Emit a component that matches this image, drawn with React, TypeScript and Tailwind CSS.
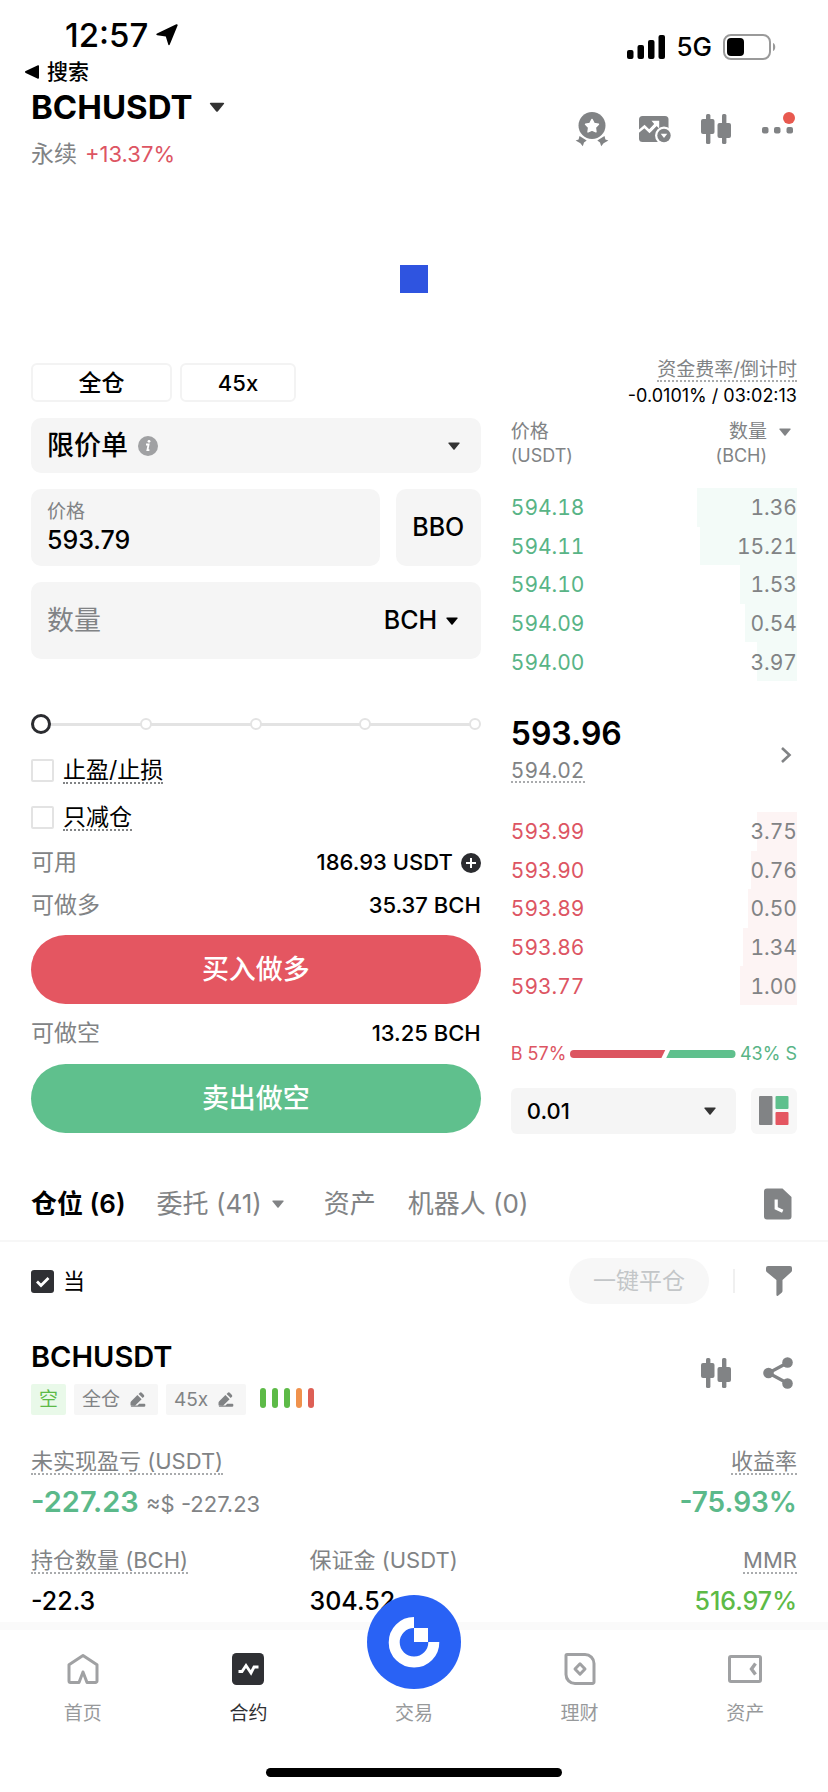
import type { ReactNode } from "react"
import clsx from "clsx"

const ASKS = [
  { price: "594.18", amount: "1.36", depth: 35 },
  { price: "594.11", amount: "15.21", depth: 34 },
  { price: "594.10", amount: "1.53", depth: 20 },
  { price: "594.09", amount: "0.54", depth: 18 },
  { price: "594.00", amount: "3.97", depth: 14 },
]

const BIDS = [
  { price: "593.99", amount: "3.75", depth: 14 },
  { price: "593.90", amount: "0.76", depth: 16 },
  { price: "593.89", amount: "0.50", depth: 17 },
  { price: "593.86", amount: "1.34", depth: 19 },
  { price: "593.77", amount: "1.00", depth: 20 },
]

const RISK_BARS = ["bg-[#5dba47]", "bg-[#5dba47]", "bg-[#5dba47]", "bg-[#f0924c]", "bg-[#dd5f55]"]

function Caret({ className }: { className?: string }) {
  return (
    <svg viewBox="0 0 12 8" className={clsx("shrink-0 fill-current", className ?? "h-2 w-3")} aria-hidden="true">
      <path d="M1 .5h10a.7.7 0 0 1 .5 1.1L6.6 7.5a.8.8 0 0 1-1.2 0L.5 1.6A.7.7 0 0 1 1 .5Z" />
    </svg>
  )
}

function Candles() {
  return (
    <svg viewBox="0 0 30 30" className="h-[30px] w-[30px] fill-[#818385]" aria-hidden="true">
      <rect x="5" y="0" width="4.4" height="30" rx="1.5" />
      <rect x="0" y="5" width="13.5" height="15" rx="2" />
      <rect x="21" y="0" width="4.4" height="30" rx="1.5" />
      <rect x="16.5" y="9" width="13.5" height="15" rx="2" />
    </svg>
  )
}

function Pencil() {
  return (
    <svg viewBox="0 0 16 16" className="h-4 w-4 fill-[#818385]" aria-hidden="true">
      <path d="M1.2 9.2 7.4 3l4.2 4.2-6.4 6.4H1.2a.7.7 0 0 1-.7-.7v-2.1c0-.6.3-1.2.7-1.6ZM8.6 1.9l1-1a1.7 1.7 0 0 1 2.4 0l1.7 1.8c.7.7.7 1.7 0 2.4l-1 1ZM7.5 13.4l1.7-1.7h5.2c.5 0 .9.4.9.9v1.2c0 .5-.4.9-.9.9H1.3c-.4 0-.6-.6-.2-1Z" />
    </svg>
  )
}

function Dotted({ children, className }: { children: ReactNode; className?: string }) {
  return (
    <span className={clsx("inline-block border-b-2 border-dotted", className)}>{children}</span>
  )
}

function IconButton({ label, children, className }: { label: string; children: ReactNode; className?: string }) {
  return (
    <button type="button" aria-label={label} className={clsx("flex items-center justify-center", className)}>
      {children}
    </button>
  )
}

function StatusBar() {
  return (
    <div>
      <div className="flex justify-between pt-[17px] pr-[52px] pl-[65px]">
        <div className="flex items-center gap-2 text-[33px] leading-9 font-medium">
          12:57
          <svg viewBox="0 0 22 22" className="h-[22px] w-[22px] fill-black" aria-hidden="true">
            <path d="M20.300.300a1 1 0 0 1 1.300 1.300l-7.800 19c-.4 1-1.600.8-1.600-.3L9.800 12.400 1.200 11.200c-1.200-.2-1.300-1.400-.2-1.800Z" />
          </svg>
        </div>
        <div className="flex h-9 items-center gap-[11px] pt-6">
          <svg viewBox="0 0 38 24" className="h-6 w-[38px] fill-black" aria-hidden="true">
            <rect x="0" y="15" width="6.500" height="9" rx="2" />
            <rect x="10.500" y="10" width="6.500" height="14" rx="2" />
            <rect x="21" y="5" width="6.500" height="19" rx="2" />
            <rect x="31.500" y="0" width="6.500" height="24" rx="2" />
          </svg>
          <span className="text-[26px] leading-6 font-medium">5G</span>
          <svg viewBox="0 0 53 26" className="h-[26px] w-[53px]" aria-hidden="true">
            <rect x="1" y="1" width="46" height="24" rx="7" fill="none" stroke="#9a9a9a" strokeWidth="2" />
            <rect x="4" y="4" width="17" height="18" rx="4" />
            <path d="M50 9c3 1 3 7 0 8Z" fill="#9a9a9a" />
          </svg>
        </div>
      </div>
      <a href="#search" className="ml-[25px] inline-flex h-[38px] items-center gap-2 align-top text-[21px] leading-6 font-medium">
        <svg viewBox="0 0 14 14" className="h-[14px] w-[14px] fill-black" aria-hidden="true">
          <path d="M12.400.400a1 1 0 0 1 1.600.800v11.600a1 1 0 0 1-1.600.8L.7 8a1.200 1.200 0 0 1 0-2Z" />
        </svg>
        搜索
      </a>
    </div>
  )
}

function Header() {
  return (
    <header className="flex items-center justify-between px-[31px]">
      <div>
        <button type="button" className="flex items-center gap-[17px] text-[33px] leading-8 font-bold">
          BCHUSDT
          <Caret className="h-[10px] w-4 text-[#333]" />
        </button>
        <p className="mt-[19px] flex gap-2 text-[22px] leading-6">
          <span className="text-[23px] text-[#818385]">永续</span>
          <span className="text-[#dd5563]">+13.37%</span>
        </p>
      </div>
      <div className="flex items-center gap-[30px]">
        <IconButton label="活动">
          <svg viewBox="0 0 34 36" className="h-9 w-[34px] fill-[#818385]" aria-hidden="true">
            <circle cx="17" cy="14.500" r="13.500" />
            <path d="m17 8.400 2.100 4 4.400.8-3.100 3.300.6 4.400-4-1.900-4 1.900.6-4.400-3.100-3.300 4.400-.8Z" fill="#fff" stroke="#fff" strokeWidth="1.400" strokeLinejoin="round" />
            <path d="m4.500 25 7.200 4.500-2.700 2-1.200 3.700-2.400-3L.6 29.600l3-1.100ZM29.500 25l-7.200 4.500 2.700 2 1.200 3.700 2.400-3 4.800-2.600-3-1.100Z" />
          </svg>
        </IconButton>
        <IconButton label="图表">
          <svg viewBox="0 0 32 28" className="h-7 w-8" aria-hidden="true">
            <rect x="0" y="1" width="29.500" height="26" rx="3.500" fill="#818385" />
            <path d="m-1 17 6.500-5.500 5 5 7.500-8" fill="none" stroke="#fff" strokeWidth="2.600" />
            <path d="M12.500 5.800h7.700v7.700l-2.700-2.500-6 6-2-2 5.700-6Z" fill="#fff" />
            <circle cx="25" cy="20.500" r="9" fill="#fff" />
            <circle cx="25" cy="20.500" r="6.700" fill="#818385" />
            <path d="M21.700 18.700h6.600L25 23Z" fill="#fff" />
          </svg>
        </IconButton>
        <IconButton label="K线">
          <Candles />
        </IconButton>
        <IconButton label="更多">
          <svg viewBox="0 0 36 36" className="h-9 w-9" aria-hidden="true">
            <rect x="1" y="16" width="6.500" height="6.500" rx="2" fill="#818385" />
            <rect x="13" y="16" width="6.500" height="6.500" rx="2" fill="#818385" />
            <rect x="25.500" y="16" width="6.500" height="6.500" rx="2" fill="#818385" />
            <circle cx="28" cy="7" r="6" fill="#e8594f" />
          </svg>
        </IconButton>
      </div>
    </header>
  )
}

function InfoRow({ label, value, children }: { label: string; value: string; children?: ReactNode }) {
  return (
    <div className="flex h-[43px] items-center justify-between">
      <span className="text-[23px] text-[#818385]">{label}</span>
      <span className="flex items-center gap-2 text-[22px] font-medium">
        {value}
        {children}
      </span>
    </div>
  )
}

function OrderForm() {
  return (
    <form className="min-w-0 pt-1">
      <div className="flex flex-col gap-4">
        <div className="flex gap-2">
          <button type="button" className="h-[39px] w-[141px] rounded-md border-2 border-[#f3f3f3] text-[23px] leading-6 font-medium">
            全仓
          </button>
          <button type="button" className="h-[39px] w-[116px] rounded-md border-2 border-[#f3f3f3] text-[22px] leading-6 font-medium">
            45x
          </button>
        </div>

        <div className="flex h-[55px] items-center gap-[10px] rounded-[10px] bg-[#f5f5f5] pr-[21px] pl-4">
          <select aria-label="订单类型" className="appearance-none text-[27px] leading-8 font-medium">
            <option>限价单</option>
          </select>
          <svg viewBox="0 0 20 20" className="h-5 w-5" aria-hidden="true">
            <circle cx="10" cy="10" r="10" fill="#a0a1a3" />
            <circle cx="11" cy="5.300" r="1.400" fill="#fff" />
            <path d="M8 8.500h2.600l-1.200 5.700h2" fill="none" stroke="#fff" strokeWidth="1.800" />
          </svg>
          <Caret className="ml-auto h-2 w-3 text-[#333]" />
        </div>

        <div className="flex gap-4">
          <label className="flex h-[77px] min-w-0 flex-1 flex-col justify-center rounded-[10px] bg-[#f5f5f5] px-4">
            <span className="text-[19px] leading-6 text-[#818385]">价格</span>
            <input type="text" defaultValue="593.79" className="w-full text-[25px] leading-8 font-medium outline-none" />
          </label>
          <button type="button" className="h-[77px] w-[85px] rounded-[10px] bg-[#f5f5f5] text-[25px] font-medium">
            BBO
          </button>
        </div>

        <div className="flex h-[77px] items-center rounded-[10px] bg-[#f5f5f5] pr-[23px] pl-4">
          <input
            type="text"
            aria-label="数量"
            placeholder="数量"
            className="min-w-0 flex-1 text-[27px] leading-8 outline-none placeholder:text-[#818385]"
          />
          <select aria-label="单位" className="appearance-none text-[25px] font-medium">
            <option>BCH</option>
          </select>
          <Caret className="ml-2 h-2 w-3" />
        </div>
      </div>

      <div className="relative mt-[55px] flex h-5 items-center">
        <div className="absolute inset-x-2 h-[3px] bg-[#e3e3e3]" />
        <div className="relative flex w-full justify-between">
          {[0, 25, 50, 75, 100].map((step) => (
            <span key={step} className="h-3 w-3 rounded-full border-2 border-[#e3e3e3] bg-white" />
          ))}
        </div>
        <input
          type="range"
          aria-label="仓位比例"
          defaultValue={0}
          className="absolute inset-0 w-full appearance-none bg-transparent [&::-webkit-slider-thumb]:h-5 [&::-webkit-slider-thumb]:w-5 [&::-webkit-slider-thumb]:appearance-none [&::-webkit-slider-thumb]:rounded-full [&::-webkit-slider-thumb]:border-3 [&::-webkit-slider-thumb]:border-[#2b2c30] [&::-webkit-slider-thumb]:bg-white"
        />
      </div>

      <div className="mt-[13px]">
        {["止盈/止损", "只减仓"].map((text) => (
          <label key={text} className="flex h-[47px] items-center gap-[9px] text-[23px] leading-6">
            <input type="checkbox" className="h-[23px] w-[23px] appearance-none rounded-xs border-2 border-[#e3e3e3]" />
            <Dotted className="border-[#818385]">{text}</Dotted>
          </label>
        ))}
      </div>

      <InfoRow label="可用" value="186.93 USDT">
        <IconButton label="充值">
          <svg viewBox="0 0 20 20" className="h-5 w-5" aria-hidden="true">
            <circle cx="10" cy="10" r="10" fill="#2b2c30" />
            <path d="M10 5v10M5 10h10" stroke="#fff" strokeWidth="2" />
          </svg>
        </IconButton>
      </InfoRow>
      <InfoRow label="可做多" value="35.37 BCH" />
      <button type="button" className="mt-2 mb-2 h-[69px] w-full rounded-full bg-[#e45661] pt-[2px] text-[27px] font-medium text-white">
        买入做多
      </button>
      <InfoRow label="可做空" value="13.25 BCH" />
      <button type="button" className="mt-[9px] h-[69px] w-full rounded-full bg-[#5fc08d] pt-[2px] text-[27px] font-medium text-white">
        卖出做空
      </button>
    </form>
  )
}

type BookRow = { price: string; amount: string; depth: number }

function BookTable({ rows, priceClass, barClass, className }: { rows: BookRow[]; priceClass: string; barClass: string; className?: string }) {
  return (
    <table className={clsx("h-[193px] w-full text-[21px] leading-6 tabular-nums", className)}>
      <tbody>
        {rows.map((row) => (
          <tr key={row.price} className="relative">
            <td className={clsx("p-0 pt-[2px]", priceClass)}>{row.price}</td>
            <td className="p-0 pt-[2px] text-right text-[#818385]">
              <span className={clsx("absolute inset-y-0 right-0", barClass)} style={{ width: `${row.depth}%` }} />
              <span className="relative">{row.amount}</span>
            </td>
          </tr>
        ))}
      </tbody>
    </table>
  )
}

function OrderBook() {
  return (
    <section className="min-w-0">
      <div className="flex flex-col items-end pt-px">
        <Dotted className="border-[#a9abad] text-[19px] leading-5 text-[#818385]">资金费率/倒计时</Dotted>
        <span className="mt-[2px] text-[18px] leading-6">-0.0101% / 03:02:13</span>
      </div>
      <div className="mt-3 flex justify-between text-[19px] leading-6 text-[#818385]">
        <div>
          价格
          <br />
          <span className="text-[18px]">(USDT)</span>
        </div>
        <button type="button" className="flex items-start gap-3 pr-[6px] text-right">
          <span>
            数量
            <br />
            <span className="text-[18px]">(BCH)</span>
          </span>
          <Caret className="mt-2 h-2 w-3" />
        </button>
      </div>

      <BookTable rows={ASKS} priceClass="text-[#58b486]" barClass="bg-[#f3fbf8]" className="mt-5" />

      <div className="mt-[37px] flex items-center justify-between">
        <div>
          <p className="text-[32px] leading-8 font-semibold">593.96</p>
          <Dotted className="mt-[11px] border-[#a9abad] align-top text-[21px] leading-5 text-[#818385] tabular-nums">594.02</Dotted>
        </div>
        <IconButton label="查看成交" className="pt-2 pr-[5px]">
          <svg viewBox="0 0 12 18" className="h-[18px] w-3" aria-hidden="true">
            <path d="m2 2 7.500 7L2 16" fill="none" stroke="#818385" strokeWidth="2.600" />
          </svg>
        </IconButton>
      </div>

      <BookTable rows={BIDS} priceClass="text-[#dd5563]" barClass="bg-[#fdf4f4]" className="mt-[29px]" />

      <div className="mt-[37px] flex h-6 items-center gap-1 text-[18px] leading-6">
        <span className="text-[#dd5563]">B 57%</span>
        <svg viewBox="0 0 172 8" preserveAspectRatio="none" className="h-2 min-w-0 flex-1" aria-hidden="true">
          <path d="M4 0h95l-4 8H4a4 4 0 0 1 0-8Z" fill="#dc5560" />
          <path d="M104 0h64a4 4 0 0 1 0 8h-68Z" fill="#5fc08d" />
        </svg>
        <span className="text-[#58b486]">43% S</span>
      </div>

      <div className="mt-[22px] flex gap-[15px]">
        <div className="flex h-[46px] min-w-0 flex-1 items-center rounded-md bg-[#f5f5f5] pr-5 pl-4">
          <select aria-label="价格精度" className="min-w-0 flex-1 appearance-none text-[22px] font-medium">
            <option>0.01</option>
          </select>
          <Caret className="h-2 w-3 text-[#333]" />
        </div>
        <IconButton label="盘口布局" className="h-[46px] w-[46px] rounded-md bg-[#f7f7f7]">
          <svg viewBox="0 0 30 30" className="h-[30px] w-[30px]" aria-hidden="true">
            <rect x="0" y="0" width="13.500" height="29" rx="1" fill="#818385" />
            <rect x="16.500" y="0" width="13" height="13" rx="1" fill="#5fc08d" />
            <rect x="16.500" y="16" width="13" height="13" rx="1" fill="#e45661" />
          </svg>
        </IconButton>
      </div>
    </section>
  )
}

function PositionTabs() {
  return (
    <nav className="mt-[34px] flex h-[74px] items-center border-b-2 border-[#f7f7f7] px-[31px] text-[26px] leading-8 text-[#818385]">
      <button type="button" className="font-semibold text-black">仓位 (6)</button>
      <button type="button" className="ml-[31px] flex items-center gap-[10px]">
        委托 (41)
        <Caret />
      </button>
      <button type="button" className="ml-10">资产</button>
      <button type="button" className="ml-8">机器人 (0)</button>
      <IconButton label="历史记录" className="mr-[5px] ml-auto">
        <svg viewBox="0 0 28 32" className="h-8 w-7" aria-hidden="true">
          <path d="M3 .5h15.500l9 8.500v19.500a3 3 0 0 1-3 3H3a3 3 0 0 1-3-3v-25a3 3 0 0 1 3-3Z" fill="#818385" />
          <path d="M12.200 11.500v8.800l6.500 3" fill="none" stroke="#fff" strokeWidth="3.200" />
        </svg>
      </IconButton>
    </nav>
  )
}

function Metric({ label, value, alignEnd, valueClass, plain }: { label: string; value: ReactNode; alignEnd?: boolean; valueClass?: string; plain?: boolean }) {
  return (
    <div className={clsx("flex flex-col", alignEnd ? "items-end" : "items-start")}>
      <Dotted className={clsx("text-[22px] leading-6 text-[#818385]", plain ? "border-transparent" : "border-[#a9abad]")}>
        {label}
      </Dotted>
      <span className={clsx("mt-[11px] leading-8", valueClass)}>{value}</span>
    </div>
  )
}

function Position() {
  return (
    <section className="px-[31px]">
      <div className="flex h-[78px] items-center">
        <label className="flex items-center gap-[9px] text-[22px] leading-6">
          <span className="relative flex">
            <input type="checkbox" defaultChecked className="peer h-[23px] w-[23px] appearance-none rounded-[3px] bg-[#2f3034]" />
            <svg viewBox="0 0 23 23" className="pointer-events-none absolute inset-0 hidden h-[23px] w-[23px] peer-checked:block" aria-hidden="true">
              <path d="m6 11.500 4 4 7.500-7.500" fill="none" stroke="#fff" strokeWidth="2.800" />
            </svg>
          </span>
          当
        </label>
        <button type="button" className="ml-auto h-[46px] w-[140px] rounded-full bg-[#f7f7f7] text-[23px] text-[#c3c6c8]">
          一键平仓
        </button>
        <span className="ml-6 h-6 w-[2px] bg-[#f0f0f0]" />
        <IconButton label="筛选" className="mr-[5px] ml-[31px]">
          <svg viewBox="0 0 26 30" className="h-[30px] w-[26px] fill-[#818385]" aria-hidden="true">
            <path d="M2 0h22a2 2 0 0 1 2 2v2.500a2 2 0 0 1-.7 1.500L16.500 14v11a2 2 0 0 1-.6 1.400L12 29.700a1 1 0 0 1-1.600-.8V14L.7 6A2 2 0 0 1 0 4.500V2a2 2 0 0 1 2-2Z" />
          </svg>
        </IconButton>
      </div>

      <div className="mt-[21px] flex items-start justify-between">
        <div>
          <h2 className="text-[29px] leading-8 font-semibold">BCHUSDT</h2>
          <div className="mt-[11px] flex items-center gap-2 text-[19px] leading-6 text-[#818385]">
            <span className="flex h-[31px] items-center rounded-xs bg-[#e9f9e9] px-2 text-[#5dba47]">空</span>
            <button type="button" className="flex h-[31px] items-center gap-[10px] rounded-xs bg-[#f6f6f6] pr-3 pl-2">
              全仓
              <Pencil />
            </button>
            <button type="button" className="flex h-[31px] items-center gap-[10px] rounded-xs bg-[#f6f6f6] pr-3 pl-2">
              45x
              <Pencil />
            </button>
            <span className="ml-[6px] flex gap-[6px] pb-1">
              {RISK_BARS.map((color, i) => (
                <span key={i} className={clsx("h-5 w-[6px] rounded-full", color)} />
              ))}
            </span>
          </div>
        </div>
        <div className="flex gap-8 pt-4 pr-1">
          <IconButton label="K线">
            <Candles />
          </IconButton>
          <IconButton label="分享">
            <svg viewBox="0 0 30 32" className="h-8 w-[30px]" aria-hidden="true">
              <path d="M25 5.500 5.500 16 25 26.500" fill="none" stroke="#818385" strokeWidth="3.200" />
              <circle cx="5.500" cy="16" r="5.300" fill="#818385" />
              <circle cx="24.500" cy="5.500" r="5.300" fill="#818385" />
              <circle cx="24.500" cy="26.500" r="5.300" fill="#818385" />
            </svg>
          </IconButton>
        </div>
      </div>

      <div className="mt-[34px] flex justify-between">
        <Metric
          label="未实现盈亏 (USDT)"
          value={
            <>
              -227.23 <span className="text-[22px] leading-none font-normal text-[#818385]">≈$ -227.23</span>
            </>
          }
          valueClass="text-[29px] font-semibold text-[#5bb98a]"
        />
        <Metric label="收益率" value="-75.93%" alignEnd valueClass="text-[28px] font-semibold text-[#5bb98a]" />
      </div>
      <div className="mt-[30px] grid grid-cols-[4fr_4fr_3fr]">
        <Metric label="持仓数量 (BCH)" value="-22.3" valueClass="text-[25px] font-medium" />
        <Metric label="保证金 (USDT)" value="304.52" valueClass="text-[25px] font-medium" plain />
        <Metric label="MMR" value="516.97%" alignEnd valueClass="text-[25px] font-medium text-[#5dba47]" />
      </div>
    </section>
  )
}

function NavItem({ label, active, children }: { label: string; active?: boolean; children: ReactNode }) {
  return (
    <a href="#" className={clsx("flex flex-1 flex-col items-center text-[19px] leading-6", active ? "text-[#2f3034]" : "text-[#97999b]")}>
      <span className="relative flex h-[34px] w-full items-center justify-center">{children}</span>
      <span className="mt-4">{label}</span>
    </a>
  )
}

function BottomNav() {
  return (
    <footer className="relative mt-[5px] border-t-8 border-[#fafafa] bg-white pt-[22px] pb-[15px]">
      <nav className="flex">
        <NavItem label="首页">
          <svg viewBox="0 0 34 34" className="h-[34px] w-[34px]" fill="none" stroke="#a0a1a3" strokeWidth="3" strokeLinejoin="round" aria-hidden="true">
            <path d="M3 12.800 17 3.500l14 9.300V29a1.500 1.500 0 0 1-1.500 1.500H21L17 20l-4 10.500H4.500A1.500 1.500 0 0 1 3 29Z" />
          </svg>
        </NavItem>
        <NavItem label="合约" active>
          <svg viewBox="0 0 34 34" className="h-[34px] w-[34px]" aria-hidden="true">
            <rect x="1" y="1" width="32" height="32" rx="4.500" fill="#2f3034" />
            <path d="M7.500 19.500h3.500l4-6 5 7.500 3-6h4.500" fill="none" stroke="#fff" strokeWidth="2.800" />
          </svg>
        </NavItem>
        <NavItem label="交易">
          <svg viewBox="0 0 94 94" className="absolute bottom-[-3px] h-[94px] w-[94px]" aria-hidden="true">
            <circle cx="47" cy="47" r="47" fill="#2962f5" />
            <path d="M47 27.500A19.800 19.800 0 1 0 66.800 47" fill="none" stroke="#fff" strokeWidth="11" />
            <path d="M47 33h14v14H47Z" fill="#fff" />
          </svg>
        </NavItem>
        <NavItem label="理财">
          <svg viewBox="0 0 34 34" className="h-[34px] w-[34px]" fill="none" stroke="#a0a1a3" strokeWidth="3" strokeLinejoin="round" aria-hidden="true">
            <path d="M4 2.500h18a9 9 0 0 1 9 9V30a1.500 1.500 0 0 1-1.500 1.500H12a9 9 0 0 1-9-9v-19a1 1 0 0 1 1-1Z" />
            <path d="m17 11.800 5 5.200-5 5.200-5-5.200Z" />
          </svg>
        </NavItem>
        <NavItem label="资产">
          <svg viewBox="0 0 34 34" className="h-[34px] w-[34px]" fill="none" stroke="#a0a1a3" strokeWidth="3" aria-hidden="true">
            <rect x="1.500" y="4.500" width="31" height="25" rx="1.500" />
            <path d="M27.500 11.500 23.500 17l4 5.500" strokeWidth="3.400" />
          </svg>
        </NavItem>
      </nav>
      <div className="mx-auto mt-[42px] h-[9px] w-[296px] rounded-full bg-black" />
    </footer>
  )
}

export default function App() {
  return (
    <div className="min-h-screen bg-white font-[Inter,'Noto_Sans_CJK_SC',sans-serif] text-black">
      <StatusBar />
      <Header />
      <div className="mx-auto mt-[99px] h-7 w-7 bg-[#2f54e0]" />
      <main>
        <div className="mt-[66px] grid grid-cols-[11fr_7fr] gap-[30px] px-[31px]">
          <OrderForm />
          <OrderBook />
        </div>
        <PositionTabs />
        <Position />
      </main>
      <BottomNav />
    </div>
  )
}
